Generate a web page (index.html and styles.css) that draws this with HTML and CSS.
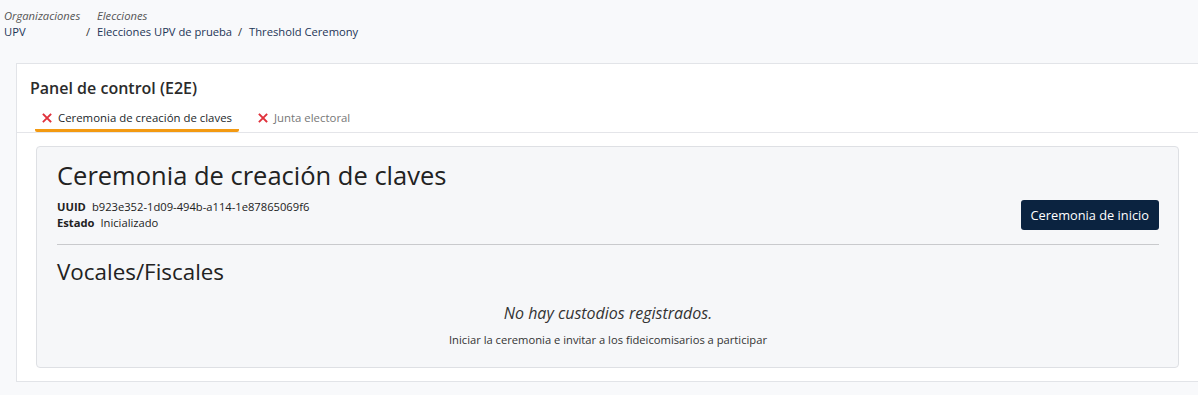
FILE: index.html
```html
<!DOCTYPE html>
<html>
<head>
<meta charset="UTF-8">
<title>Panel de control (E2E)</title>
<link rel="stylesheet" href="styles.css">
</head>
<body>
<div class="crumbs">
	<div class="crumb crumb-first">
		<span class="crumb-label">Organizaciones</span>
		<span class="crumb-value">UPV</span>
	</div>
	<div class="crumb">
		<span class="crumb-label crumb-label-sep">Elecciones</span>
		<span class="crumb-value"><i class="sep">/</i>Elecciones UPV de prueba</span>
	</div>
	<div class="crumb">
		<span class="crumb-label">&nbsp;</span>
		<span class="crumb-value"><i class="sep">/</i>Threshold Ceremony</span>
	</div>
</div>

<div class="panel">
	<h2 class="panel-title">Panel de control (E2E)</h2>
	<div class="tabs">
		<div class="tab tab-active">
			<svg class="tab-x" width="10" height="10" viewBox="0 0 10 10"><path d="M1.5 1.5l7 7M8.5 1.5l-7 7" stroke="#e0313b" stroke-width="1.8" stroke-linecap="square"/></svg>
			Ceremonia de creación de claves
		</div>
		<div class="tab">
			<svg class="tab-x" width="10" height="10" viewBox="0 0 10 10"><path d="M1.5 1.5l7 7M8.5 1.5l-7 7" stroke="#e0313b" stroke-width="1.8" stroke-linecap="square"/></svg>
			Junta electoral
		</div>
	</div>
	<div class="panel-body">
		<div class="box">
			<h1 class="box-title">Ceremonia de creación de claves</h1>
			<div class="box-head">
				<div class="meta">
					<p><b>UUID</b>b923e352-1d09-494b-a114-1e87865069f6</p>
					<p><b>Estado</b>Inicializado</p>
				</div>
				<button class="btn">Ceremonia de inicio</button>
			</div>
			<hr class="box-rule">
			<h3 class="box-sub">Vocales/Fiscales</h3>
			<div class="empty">
				<p class="empty-title">No hay custodios registrados.</p>
				<p class="empty-text">Iniciar la ceremonia e invitar a los fideicomisarios a participar</p>
			</div>
		</div>
	</div>
</div>
</body>
</html>
```

FILE: styles.css
```css
*{margin: 0;padding: 0;box-sizing: border-box;}
html, body {
	background: #f8f9fb;
	overflow: hidden;
}
body {
	font-family: "Open Sans", "Liberation Sans", sans-serif;
	color: #222;
	width: 1198px;
}
.crumbs {
	display: flex;
	gap: 6px;
	padding: 8px 0 0 4px;
	font-size: 11.2px;
	line-height: 16px;
	height: 63px;
}
.crumb {
	display: flex;
	flex-direction: column;
}
.crumb-first {
	width: 76px;
}
.crumb-label {
	font-style: italic;
	color: #555;
}
.crumb-label-sep {
	padding-left: 11px;
}
.crumb-value {
	color: #1d3557;
}
.sep {
	font-style: normal;
	color: #333;
	display: inline-block;
	width: 11px;
}
.panel {
	margin: 0 -1px 0 16px;
	background: #fff;
	border: 1px solid #e2e4e8;
	padding-bottom: 13px;
}
.panel-title {
	font-size: 16px;
	font-weight: 600;
	line-height: 22px;
	color: #2b2b2b;
	padding: 13px 0 0 13px;
}
.tabs {
	display: flex;
	padding: 11px 0 0 18px;
	border-bottom: 1px solid #e4e5e9;
	font-size: 11.4px;
	line-height: 16px;
}
.tab {
	display: flex;
	align-items: center;
	padding: 0 7px 6px 7px;
	color: #777;
	margin-right: 12px;
}
.tab-active {
	color: #1b1f2a;
	font-weight: 500;
	border-bottom: 3px solid #f39a12;
	padding-bottom: 3px;
	border-radius: 0 0 2px 2px;
}
.tab-x {
	margin-right: 6px;
}
.panel-body {
	padding: 13px 19px 0 19px;
}
.box {
	background: #f6f7f9;
	border: 1px solid #dee0e4;
	border-radius: 4px;
	padding: 10px 19px 19px 20px;
}
.box-title {
	font-size: 25.5px;
	font-weight: 400;
	line-height: 36px;
	color: #222;
}
.box-head {
	display: flex;
	align-items: center;
	justify-content: space-between;
	margin-top: 6px;
}
.meta {
	font-size: 11.2px;
	line-height: 16px;
}
.meta b {
	font-weight: 700;
	margin-right: 6px;
}
.btn {
	font-family: inherit;
	background: #0b2340;
	color: #fff;
	border: 0;
	border-radius: 3px;
	font-size: 12.8px;
	height: 30px;
	padding: 0 10px;
}
.box-rule {
	border: 0;
	border-top: 1px solid #c9cacd;
	margin-top: 13px;
}
.box-sub {
	font-size: 22.4px;
	font-weight: 400;
	line-height: 30px;
	margin-top: 12px;
	color: #222;
}
.empty {
	text-align: center;
	padding-top: 14px;
}
.empty-title {
	font-size: 16px;
	font-style: italic;
	line-height: 24px;
	color: #333;
}
.empty-text {
	font-size: 11.2px;
	line-height: 16px;
	margin-top: 7px;
	color: #333;
}
```
